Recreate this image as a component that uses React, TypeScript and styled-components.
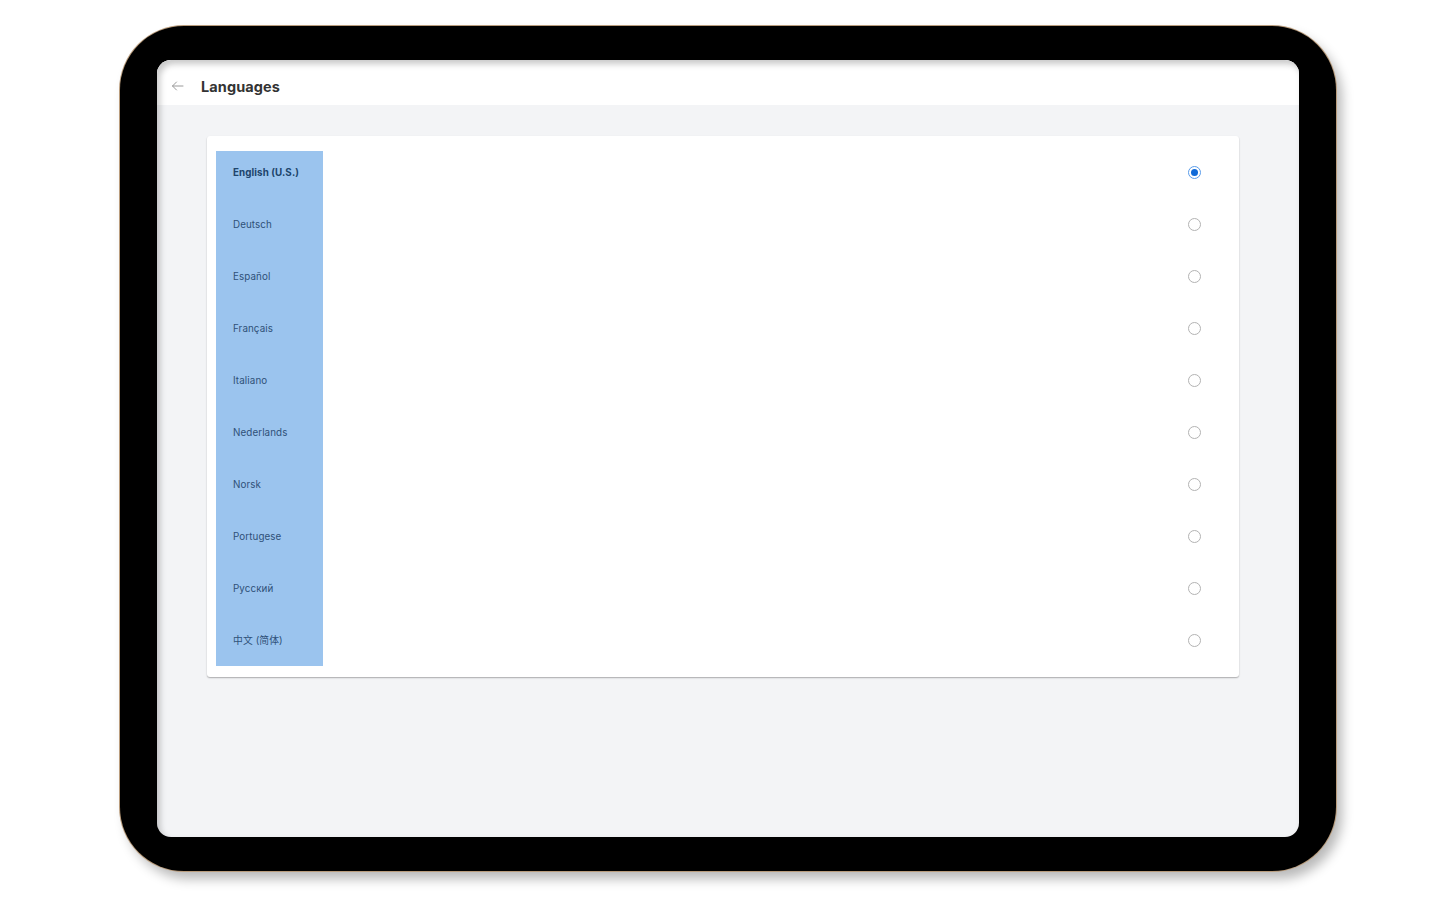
import React from "react";
import styled, { createGlobalStyle } from "styled-components";

const Global = createGlobalStyle`
  html, body { margin: 0; padding: 0; background: #ffffff; }
  body { font-family: Inter, "Noto Sans", "Noto Sans CJK SC", sans-serif; }
  * { box-sizing: border-box; }
`;

const Stage = styled.div`
  width: 1456px;
  height: 897px;
  display: flex;
  align-items: center;
  justify-content: center;
`;

const Device = styled.div`
  width: 1216px;
  height: 845px;
  background: #000;
  border-radius: 64px;
  padding: 34px 37px;
  box-shadow: 0 0 0 1px #b99c7c, 6px 8px 12px rgba(0, 0, 0, 0.28);
  display: flex;
`;

const Screen = styled.div`
  flex: 1;
  border-radius: 14px;
  background: #f3f4f6;
  overflow: hidden;
  display: flex;
  flex-direction: column;
  position: relative;
  &::after {
    content: "";
    position: absolute;
    inset: 0;
    border-radius: 14px;
    box-shadow: inset 3px 4px 6px rgba(0, 0, 0, 0.22);
    pointer-events: none;
  }
`;

const Header = styled.div`
  height: 45px;
  background: #fff;
  display: flex;
  align-items: center;
  padding: 7px 0 0 12px;
  gap: 16px;
  flex-shrink: 0;
`;

const BackButton = styled.button`
  border: none;
  background: none;
  padding: 0;
  width: 16px;
  height: 16px;
  display: flex;
  align-items: center;
  justify-content: center;
  cursor: pointer;
`;

const Title = styled.h1`
  margin: 0;
  font-size: 14.5px;
  font-weight: 700;
  color: #333;
  letter-spacing: 0.1px;
`;

const Content = styled.div`
  flex: 1;
  padding: 31px 60px 0 50px;
`;

const Card = styled.div`
  background: #fff;
  border-radius: 3px;
  box-shadow: 0 1px 1.5px rgba(0, 0, 0, 0.3);
  padding: 15px 38px 11px 9px;
  display: flex;
  justify-content: space-between;
`;

const LabelColumn = styled.div`
  width: 107px;
  background: #9bc4ee;
  display: flex;
  flex-direction: column;
  gap: 10px;
  padding-bottom: 5px;
`;

const Label = styled.div<{ $active?: boolean }>`
  height: 42px;
  display: flex;
  align-items: center;
  padding-left: 17px;
  font-size: 9.8px;
  letter-spacing: 0.1px;
  font-weight: ${(p) => (p.$active ? 700 : 400)};
  color: ${(p) => (p.$active ? "#20446c" : "#2f5178")};
  white-space: nowrap;
`;

const RadioColumn = styled.div`
  display: flex;
  flex-direction: column;
  gap: 10px;
`;

const RadioCell = styled.div`
  height: 42px;
  display: flex;
  align-items: center;
`;

const Radio = styled.span<{ $checked?: boolean }>`
  width: 13px;
  height: 13px;
  border-radius: 50%;
  border: 1px solid ${(p) => (p.$checked ? "#5a9cea" : "#b3b3b3")};
  display: flex;
  align-items: center;
  justify-content: center;
  background: #fff;
  &::after {
    content: "";
    width: 7px;
    height: 7px;
    border-radius: 50%;
    background: ${(p) => (p.$checked ? "#106ad8" : "transparent")};
  }
`;

const languages = [
  "English (U.S.)",
  "Deutsch",
  "Español",
  "Français",
  "Italiano",
  "Nederlands",
  "Norsk",
  "Portugese",
  "Русский",
  "中文 (简体)",
];

export default function App() {
  const selected = 0;
  return (
    <>
      <Global />
      <Stage>
        <Device>
          <Screen>
            <Header>
              <BackButton aria-label="Back">
                <svg width="13" height="10" viewBox="0 0 13 10" fill="none">
                  <path d="M12 5H1.5M5.5 1L1.5 5l4 4" stroke="#9a9a9a" strokeWidth="1" strokeLinecap="round" strokeLinejoin="round" />
                </svg>
              </BackButton>
              <Title>Languages</Title>
            </Header>
            <Content>
              <Card>
                <LabelColumn>
                  {languages.map((l, i) => (
                    <Label key={l} $active={i === selected}>
                      {l}
                    </Label>
                  ))}
                </LabelColumn>
                <RadioColumn>
                  {languages.map((l, i) => (
                    <RadioCell key={l}>
                      <Radio $checked={i === selected} />
                    </RadioCell>
                  ))}
                </RadioColumn>
              </Card>
            </Content>
          </Screen>
        </Device>
      </Stage>
    </>
  );
}
